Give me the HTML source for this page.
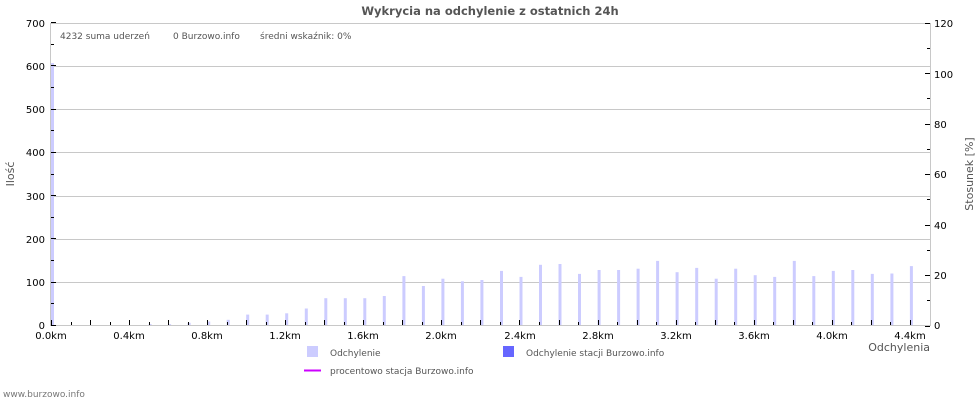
<!DOCTYPE html>
<html><head><meta charset="utf-8"><style>
html,body{margin:0;padding:0;background:#fff;width:980px;height:400px;overflow:hidden}
svg{display:block;font-family:"DejaVu Sans","Liberation Sans",sans-serif}
</style></head><body>
<svg width="980" height="400" viewBox="0 0 980 400" xmlns="http://www.w3.org/2000/svg">
<text x="490" y="15" text-anchor="middle" font-size="11.5" font-weight="bold" fill="#555">Wykrycia na odchylenie z ostatnich 24h</text>
<g stroke="#c8c8c8" stroke-width="1">
<line x1="50" y1="23.5" x2="930" y2="23.5"/>
<line x1="50" y1="66.5" x2="930" y2="66.5"/>
<line x1="50" y1="109.5" x2="930" y2="109.5"/>
<line x1="50" y1="152.5" x2="930" y2="152.5"/>
<line x1="50" y1="196.5" x2="930" y2="196.5"/>
<line x1="50" y1="239.5" x2="930" y2="239.5"/>
<line x1="50" y1="282.5" x2="930" y2="282.5"/>
<line x1="50" y1="325.5" x2="930" y2="325.5"/>
<line x1="50.5" y1="23" x2="50.5" y2="326"/>
<line x1="930.5" y1="23" x2="930.5" y2="326"/>
</g>
<g id="bars" fill="#ccccff"></g>
<g id="ticks" stroke="#000" stroke-width="1"></g>
<text x="60" y="39" font-size="9" fill="#555">4232 suma uderzeń</text>
<text x="173" y="39" font-size="9" fill="#555">0 Burzowo.info</text>
<text x="260" y="39" font-size="9" fill="#555">średni wskaźnik: 0%</text>
<g font-size="10" fill="#000" text-anchor="end">
<text x="45" y="27">700</text><text x="45" y="70">600</text><text x="45" y="113">500</text><text x="45" y="156">400</text><text x="45" y="200">300</text><text x="45" y="243">200</text><text x="45" y="286">100</text><text x="45" y="329">0</text>
</g>
<g font-size="10" fill="#000">
<text x="934" y="27">120</text><text x="934" y="78">100</text><text x="934" y="128">80</text><text x="934" y="178">60</text><text x="934" y="229">40</text><text x="934" y="279">20</text><text x="934" y="329">0</text>
</g>
<g font-size="10" fill="#000" text-anchor="middle">
<text x="51" y="339">0.0km</text><text x="129" y="339">0.4km</text><text x="207" y="339">0.8km</text><text x="285" y="339">1.2km</text><text x="363" y="339">1.6km</text><text x="441" y="339">2.0km</text><text x="520" y="339">2.4km</text><text x="598" y="339">2.8km</text><text x="676" y="339">3.2km</text><text x="754" y="339">3.6km</text><text x="832" y="339">4.0km</text><text x="910" y="339">4.4km</text>
</g>
<text x="930" y="351" font-size="11" fill="#555" text-anchor="end">Odchylenia</text>
<text transform="translate(14,174) rotate(-90)" font-size="11" fill="#555" text-anchor="middle">Ilość</text>
<text transform="translate(973,174) rotate(-90)" font-size="11" fill="#555" text-anchor="middle">Stosunek [%]</text>
<rect x="307" y="346" width="11" height="11" fill="#ccccff"/>
<text x="330" y="356" font-size="9" fill="#555">Odchylenie</text>
<rect x="503" y="346" width="11" height="11" fill="#6666ff"/>
<text x="526" y="356" font-size="9" fill="#555">Odchylenie stacji Burzowo.info</text>
<line x1="304" y1="370.5" x2="321" y2="370.5" stroke="#cc00ff" stroke-width="2"/>
<text x="330" y="374" font-size="9" fill="#555">procentowo stacja Burzowo.info</text>
<text x="3" y="397" font-size="9" fill="#777">www.burzowo.info</text>
</svg>
<script>
var v=[605,0,0,0,0,2,2,5,8,12,24,24,27,38,62,62,62,67,113,90,107,101,104,125,111,139,141,118,127,127,130,148,122,132,107,130,115,111,148,113,125,127,118,119,136];
var b=document.getElementById('bars'),t=document.getElementById('ticks'),s='';
var tk='';
for(var i=0;i<v.length;i++){var x=51+i*19.52;var h=v[i]*0.4329;
if(h>0)s+='<rect x="'+x.toFixed(1)+'" y="'+(325-h).toFixed(1)+'" width="3" height="'+h.toFixed(1)+'"/>';
var xx=Math.round(x)+0.5;tk+='<line x1="'+xx+'" y1="'+(i%2?322:320)+'" x2="'+xx+'" y2="325"/>';}
for(var j=0;j<=14;j++){var y=Math.round(325-j*21.64)+0.5;tk+='<line x1="51" y1="'+y+'" x2="'+(j%2?54:56)+'" y2="'+y+'"/>';}
for(var k=0;k<=12;k++){var y=Math.round(325.5-k*25.25)+0.5;tk+='<line x1="'+(k%2?927:925)+'" y1="'+y+'" x2="930" y2="'+y+'"/>';}
b.innerHTML=s;t.innerHTML=tk;
</script>
</body></html>
